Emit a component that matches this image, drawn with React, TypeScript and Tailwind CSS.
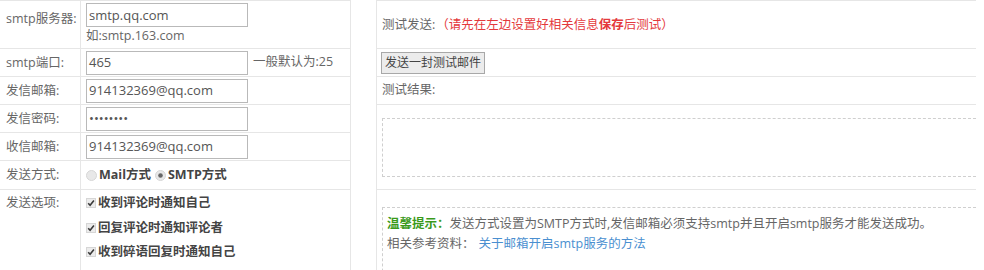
import React from "react";

const font = { fontFamily: '"Open Sans", "Noto Sans CJK SC", sans-serif' };

function Check() {
  return (
    <svg width="10" height="10" viewBox="0 0 10 10" className="mr-[2px] shrink-0">
      <rect x="0.5" y="0.5" width="9" height="9" fill="#ececec" stroke="#d6d6d6" />
      <path d="M2.2 5.3 L4.1 7.3 L7.9 2.6" fill="none" stroke="#3a3a3a" strokeWidth="1.6" />
    </svg>
  );
}

function Radio({ on }: { on?: boolean }) {
  return (
    <svg width="11" height="11" viewBox="0 0 11 11" className="mr-[2px] shrink-0">
      <circle cx="5.5" cy="5.5" r="5" fill="#e8e8e8" stroke="#d6d6d6" />
      {on && <circle cx="5.5" cy="5.5" r="2.3" fill="#666" />}
    </svg>
  );
}

function Input({ value }: { value: string }) {
  return (
    <div className="w-[162px] h-[24px] border border-[#b9b9b9] bg-white px-[2px] flex items-center text-[13px] text-[#555] leading-none">
      {value}
    </div>
  );
}

function Row({ label, h, children, pt }: { label: string; h: string; children: React.ReactNode; pt?: string }) {
  return (
    <div className={`flex border-b border-[#e6e6e6] ${h}`}>
      <div className={`w-[81px] shrink-0 border-r border-[#e6e6e6] pl-[6px] text-[12.5px] leading-[18px] text-[#666] flex ${pt ? `items-start ${pt}` : "items-center"}`}>
        {label}
      </div>
      <div className="flex-1 pl-[5px] text-[12.5px] text-[#555]">{children}</div>
    </div>
  );
}

export default function App() {
  return (
    <div className="w-[984px] h-[270px] bg-white flex overflow-hidden" style={font}>
      <div className="w-[351px] shrink-0 border-t border-r border-[#e6e6e6]">
        <Row label="smtp服务器:" h="h-[48px]" pt="pt-[9px]">
          <div className="pt-[2px]">
            <Input value="smtp.qq.com" />
            <div className="text-[12.5px] leading-[16px] text-[#666] mt-[1px]">如:smtp.163.com</div>
          </div>
        </Row>
        <Row label="smtp端口:" h="h-[28px]">
          <div className="flex items-center h-full">
            <Input value="465" />
            <span className="ml-[5px] text-[12.5px] text-[#666]">一般默认为:25</span>
          </div>
        </Row>
        <Row label="发信邮箱:" h="h-[28px]">
          <div className="flex items-center h-full">
            <Input value="914132369@qq.com" />
          </div>
        </Row>
        <Row label="发信密码:" h="h-[28px]">
          <div className="flex items-center h-full">
            <Input value="••••••••" />
          </div>
        </Row>
        <Row label="收信邮箱:" h="h-[28px]">
          <div className="flex items-center h-full">
            <Input value="914132369@qq.com" />
          </div>
        </Row>
        <Row label="发送方式:" h="h-[29px]">
          <div className="flex items-center h-full font-bold text-[#444] text-[12.5px]">
            <Radio />
            <span>Mail方式</span>
            <span className="ml-[4px]"><Radio on /></span>
            <span>SMTP方式</span>
          </div>
        </Row>
        <Row label="发送选项:" h="h-[82px]" pt="pt-[4px]">
          <div className="flex flex-col pt-[1px] font-bold text-[#444] text-[12.5px] leading-[24.5px]">
            <div className="flex items-center"><Check />收到评论时通知自己</div>
            <div className="flex items-center"><Check />回复评论时通知评论者</div>
            <div className="flex items-center"><Check />收到碎语回复时通知自己</div>
          </div>
        </Row>
      </div>
      <div className="w-[25px] shrink-0" />
      <div className="w-[600px] shrink-0 border-l border-t border-[#e6e6e6] text-[12.5px] text-[#666]">
        <div className="h-[48px] border-b border-[#e6e6e6] flex items-center pl-[5px] pt-[2px]">
          测试发送:
          <span className="text-[#e4393c] ml-[1px]">
            （请先在左边设置好相关信息<b>保存</b>后测试）
          </span>
        </div>
        <div className="h-[28px] border-b border-[#e6e6e6] flex items-center pl-[4px]">
          <button className="h-[22px] px-[3px] border border-[#a8a8a8] bg-[#ececec] text-[12px] text-[#444] leading-none">
            发送一封测试邮件
          </button>
        </div>
        <div className="h-[28px] border-b border-[#e6e6e6] flex items-center pl-[5px]">测试结果:</div>
        <div className="h-[85px] border-b border-[#e6e6e6] pl-[5px] pt-[13px]">
          <div className="h-[59px] border border-dashed border-[#cfcfcf] border-r-0" />
        </div>
        <div className="pl-[5px] pt-[17px]">
          <div className="h-[80px] border border-dashed border-[#cfcfcf] border-r-0 border-b-0 pl-[4px] pt-[6px] leading-[20px]">
            <div>
              <b className="text-[#3a9a1a]">温馨提示：</b>发送方式设置为SMTP方式时,发信邮箱必须支持smtp并且开启smtp服务才能发送成功。
            </div>
            <div>
              相关参考资料：<span className="ml-[4px] text-[#4a8fd0]">关于邮箱开启smtp服务的方法</span>
            </div>
          </div>
        </div>
      </div>
    </div>
  );
}
